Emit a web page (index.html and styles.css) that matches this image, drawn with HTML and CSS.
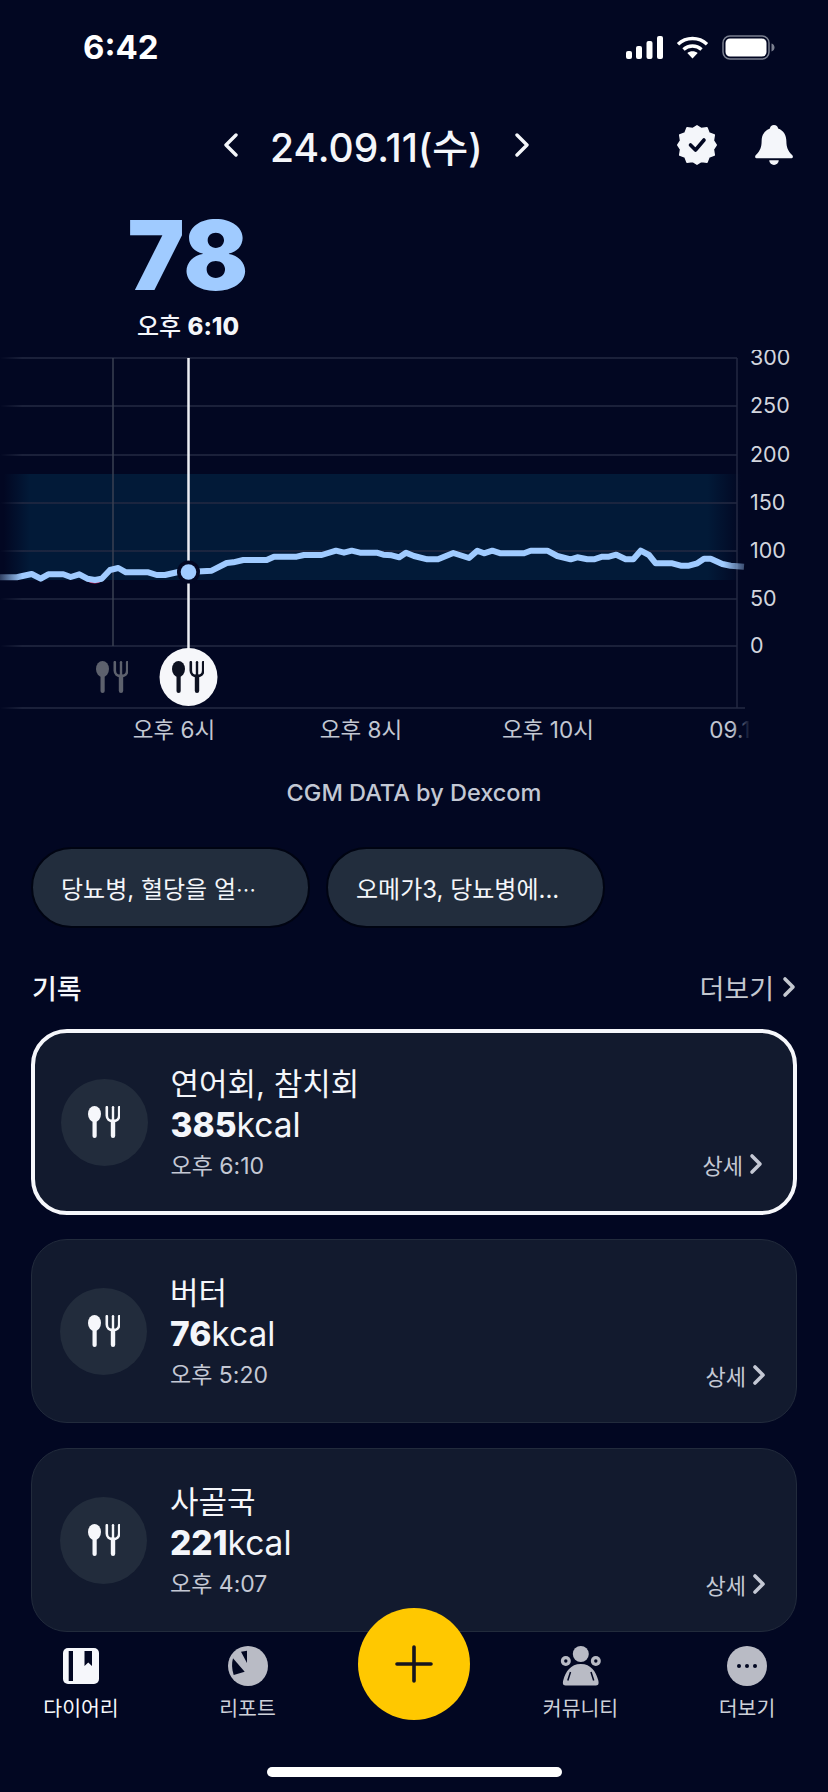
FILE: index.html

```html
<!DOCTYPE html>
<html lang="ko">
<head>
    <meta charset="UTF-8">
    <meta name="viewport" content="width=device-width, initial-scale=1.0">
    <title>다이어리</title>
    <link rel="stylesheet" href="styles.css">
</head>
<body>
    <svg class="defs" width="0" height="0">
        <symbol id="meal" viewBox="0 0 32 32">
            <ellipse cx="6.500" cy="8" rx="6.500" ry="8"/>
            <rect x="4.500" y="12" width="4.200" height="20" rx="2.100"/>
            <path d="M18.800 1.200v8.300c0 3.700 2.700 5.700 6.200 5.700s6.200-2 6.200-5.700V1.200" fill="none" stroke="currentColor" stroke-width="2.600" stroke-linecap="round"/>
            <path d="M25 1.200v12" fill="none" stroke="currentColor" stroke-width="2.400" stroke-linecap="round"/>
            <rect x="22.800" y="13" width="4.400" height="19" rx="2.200"/>
        </symbol>
        <symbol id="chevron" viewBox="0 0 14 22">
            <path d="M3 3l8 8-8 8" fill="none" stroke="currentColor" stroke-width="3.600" stroke-linecap="round" stroke-linejoin="round"/>
        </symbol>
    </svg>

    <div class="screen">
        <div class="status-bar">
            <span class="clock">6:42</span>
            <div class="status-icons">
                <svg width="37" height="23" viewBox="0 0 37 23" fill="#fff">
                    <rect x="0" y="15" width="6" height="8" rx="2"/>
                    <rect x="10" y="10" width="6" height="13" rx="2"/>
                    <rect x="20.500" y="5" width="6" height="18" rx="2"/>
                    <rect x="31" y="0" width="6" height="23" rx="2"/>
                </svg>
                <svg width="33" height="23" viewBox="0 0 33 23" fill="none" stroke="#fff" stroke-width="3.400">
                    <path d="M2 8.200C10 .6 23 .6 31 8.200"/>
                    <path d="M7.500 13.500c5-4.600 13-4.600 18 0"/>
                    <path d="M16.500 22.500l-5.200-5.400c2.900-2.400 7.500-2.400 10.400 0z" fill="#fff" stroke="none"/>
                </svg>
                <svg width="53" height="25" viewBox="0 0 53 25">
                    <rect x="1" y="1" width="46" height="23" rx="7" fill="none" stroke="#7b8090" stroke-width="1.500"/>
                    <rect x="3.500" y="3.500" width="41" height="18" rx="4.500" fill="#fff"/>
                    <path d="M49.500 8.500c2 .6 3 2.200 3 4s-1 3.400-3 4z" fill="#7b8090"/>
                </svg>
            </div>
        </div>

        <div class="top-bar">
            <svg class="nav-arrow" width="16" height="24" viewBox="0 0 16 24"><path d="M13 2L3 12l10 10"/></svg>
            <span class="date">24.09.11(수)</span>
            <svg class="nav-arrow" width="16" height="24" viewBox="0 0 16 24"><path d="M3 2l10 10L3 22"/></svg>
            <div class="top-actions">
                <svg width="40" height="40" viewBox="0 0 40 40">
                    <path fill="#f4f6fa" stroke="#f4f6fa" stroke-width="1.500" stroke-linejoin="round" d="M20 .8L24.400 3.600 30 2.700 32 8 37.300 10 36.400 15.600 39.200 20 36.400 24.400 37.300 30 32 32 30 37.300 24.400 36.400 20 39.200 15.600 36.400 10 37.300 8 32 2.700 30 3.600 24.400.8 20 3.600 15.600 2.700 10 8 8 10 2.700 15.600 3.600z"/>
                    <path d="M13.500 20l5 5 8.500-10" fill="none" stroke="#020722" stroke-width="3.600" stroke-linecap="round" stroke-linejoin="round"/>
                </svg>
                <svg width="42" height="40" viewBox="0 0 42 42" fill="#f4f6fa">
                    <path d="M21 0c2.500 0 4 1.600 4.300 3.600C31 5.500 34 10.500 34 17c0 6 1.500 10 6 14.500 1.600 1.600.8 3.500-1.500 3.500h-35C1.200 35 .4 33.100 2 31.500 6.500 27 8 23 8 17c0-6.500 3-11.500 8.700-13.400C17 1.600 18.500 0 21 0z"/>
                    <path d="M16 37h10a5 5 0 0 1-10 0z"/>
                </svg>
            </div>
        </div>

        <div class="reading">
            <div class="reading-value">78</div>
            <div class="reading-time">오후 <b>6:10</b></div>
        </div>

        <svg class="chart" width="828" height="400" viewBox="0 350 828 400">
            <defs>
                <linearGradient id="bandFade" gradientUnits="userSpaceOnUse" x1="0" y1="0" x2="745" y2="0">
                    <stop offset="0.005" stop-color="#021a38" stop-opacity="0"/>
                    <stop offset="0.04" stop-color="#021a38"/>
                    <stop offset="0.95" stop-color="#021a38"/>
                    <stop offset="0.995" stop-color="#021a38" stop-opacity="0"/>
                </linearGradient>
                <linearGradient id="lineFade" gradientUnits="userSpaceOnUse" x1="0" y1="0" x2="746" y2="0">
                    <stop offset="0" stop-color="#a0cbff" stop-opacity="0.3"/>
                    <stop offset="0.03" stop-color="#a0cbff"/>
                    <stop offset="0.97" stop-color="#a0cbff"/>
                    <stop offset="1" stop-color="#a0cbff" stop-opacity="0.3"/>
                </linearGradient>
                <linearGradient id="gridFade" gradientUnits="userSpaceOnUse" x1="0" y1="0" x2="745" y2="0">
                    <stop offset="0" stop-color="#232942" stop-opacity="0"/>
                    <stop offset="0.03" stop-color="#232942"/>
                </linearGradient>
                <linearGradient id="cutFade" gradientUnits="userSpaceOnUse" x1="706" y1="0" x2="750" y2="0">
                    <stop offset="0.6" stop-color="#c3c7d2"/>
                    <stop offset="1" stop-color="#c3c7d2" stop-opacity="0"/>
                </linearGradient>
            </defs>

            <rect x="0" y="474" width="745" height="106" fill="url(#bandFade)"/>

            <g class="grid">
                <path d="M0 358H737"/>
                <path d="M0 406H737"/>
                <path d="M0 455H737"/>
                <path d="M0 503H737"/>
                <path d="M0 551H737"/>
                <path d="M0 599H737"/>
                <path d="M0 646H737"/>
                <path class="axis-y" d="M737 358V708"/>
                <path d="M0 708H745"/>
            </g>
            <path d="M113 358V646" stroke="#3a4052" stroke-width="1.500"/>
            <path d="M188.500 358V650" stroke="#eceef3" stroke-width="2.500"/>

            <path d="M87.300 579Q95 584 101.700 579" fill="none" stroke="#e0245e" stroke-width="4"/>
            <path class="glucose" d="M0 577.300L16.700 577.300 31.700 574 40.700 578.700 48.300 574.300 63.300 574.300 70.700 577 79.300 574.300 87.300 578.700 95 580 101.700 578.700 110 570 118.300 568 126 572.300 148.300 572.300 156.700 575 165 575 178.300 572 188.300 572 211.700 570.700 226.700 563 233.300 562.300 243.300 560 266.700 560 274 556.700 296.700 556.700 304 555 321.700 555 336 550.700 344 552.700 351.700 550.700 360 552.700 376.700 552.700 383.300 554.700 391.700 555.300 399.300 557.300 406 552.700 414 556 427.300 559.300 438 559.300 453.300 553 469 558 477.300 550.700 484 553.300 492.300 550.700 500.700 553.300 524 553.300 530.700 550.700 547.300 550.700 557.300 556 570.700 559.300 577.300 557.300 587.300 559.300 594 559.300 602.300 556.700 609 556.700 616.300 554.700 625.700 559.300 633.300 559.300 640.700 550.700 649 555 655.700 563.300 672.300 563.300 680.700 565.700 689 565.700 697.300 563.300 704 558.700 710.700 558.700 722.300 564 730.700 565.700 744 566.700"/>

            <circle cx="188.500" cy="572" r="11.500" fill="#020722"/>
            <circle cx="188.500" cy="572" r="7.800" fill="#a0cbff"/>

            <use href="#meal" class="meal-past" x="96" y="661" width="32" height="32"/>
            <circle cx="188.500" cy="677" r="29" fill="#f6f7fa"/>
            <use href="#meal" class="meal-active" x="172" y="661" width="32" height="32"/>

            <g class="y-labels">
                <text x="750" y="365">300</text>
                <text x="750" y="413">250</text>
                <text x="750" y="462">200</text>
                <text x="750" y="510">150</text>
                <text x="750" y="558">100</text>
                <text x="750" y="606">50</text>
                <text x="750" y="653">0</text>
            </g>
            <g class="x-labels">
                <text x="174" y="738">오후 6시</text>
                <text x="361" y="738">오후 8시</text>
                <text x="548" y="738">오후 10시</text>
                <text x="730" y="738" class="x-cut">09.1</text>
            </g>
        </svg>

        <div class="credit">CGM DATA by Dexcom</div>

        <div class="chips">
            <div class="chip"><span>당뇨병, 혈당을 얼<span class="ellipsis">…</span></span></div>
            <div class="chip">오메가3, 당뇨병에...</div>
        </div>

        <div class="section-head">
            <span class="section-title">기록</span>
            <span class="section-more">더보기 <svg width="14" height="22"><use href="#chevron"/></svg></span>
        </div>

        <div class="records">
            <div class="record selected">
                <div class="record-icon"><svg width="32" height="32"><use href="#meal"/></svg></div>
                <div class="record-body">
                    <div class="record-name">연어회, 참치회</div>
                    <div class="record-kcal"><b>385</b>kcal</div>
                    <div class="record-time">오후 6:10</div>
                </div>
                <span class="record-link">상세 <svg width="14" height="22"><use href="#chevron"/></svg></span>
            </div>
            <div class="record">
                <div class="record-icon"><svg width="32" height="32"><use href="#meal"/></svg></div>
                <div class="record-body">
                    <div class="record-name">버터</div>
                    <div class="record-kcal"><b>76</b>kcal</div>
                    <div class="record-time">오후 5:20</div>
                </div>
                <span class="record-link">상세 <svg width="14" height="22"><use href="#chevron"/></svg></span>
            </div>
            <div class="record">
                <div class="record-icon"><svg width="32" height="32"><use href="#meal"/></svg></div>
                <div class="record-body">
                    <div class="record-name">사골국</div>
                    <div class="record-kcal"><b>221</b>kcal</div>
                    <div class="record-time">오후 4:07</div>
                </div>
                <span class="record-link">상세 <svg width="14" height="22"><use href="#chevron"/></svg></span>
            </div>
        </div>

        <nav class="tab-bar">
            <div class="tab active">
                <svg width="36" height="40" viewBox="0 0 36 40">
                    <rect x="0" y="2" width="36" height="36" rx="5" fill="#f6f7fb"/>
                    <rect x="5.700" y="5" width="4.300" height="30" fill="#020722"/>
                    <path d="M21.500 5h7.500v15l-3.750-3.500L21.500 20z" fill="#020722"/>
                </svg>
                <span>다이어리</span>
            </div>
            <div class="tab">
                <svg width="40" height="40" viewBox="0 0 40 40">
                    <circle cx="20" cy="20" r="20" fill="#b9bbc5"/>
                    <path d="M13 5.700L19 4.700V17z" fill="#020722"/>
                    <path d="M5 12.300L16.700 25.700 5.700 29C3.800 23 3.500 17.500 5 12.300z" fill="#020722"/>
                </svg>
                <span>리포트</span>
            </div>
            <div class="tab-spacer"></div>
            <div class="tab">
                <svg width="42" height="40" viewBox="0 0 41 40" fill="#b9bbc5">
                    <circle cx="20.300" cy="8" r="8"/>
                    <circle cx="5.300" cy="15" r="5"/>
                    <circle cx="35.300" cy="15" r="5"/>
                    <circle cx="5.300" cy="15" r="1.700" fill="#020722"/>
                    <circle cx="35.300" cy="15" r="1.700" fill="#020722"/>
                    <path d="M5 39.500C2 39.500 2 36.500 3 33.500 5 26 10 18 20.300 18S35.500 26 37.500 33.500C38.500 36.500 38.500 39.500 35.500 39.500z"/>
                    <path d="M10 26l-2.700 8.500M30.500 26l2.700 8.500" stroke="#020722" stroke-width="1.500" fill="none"/>
                </svg>
                <span>커뮤니티</span>
            </div>
            <div class="tab">
                <svg width="40" height="40" viewBox="0 0 40 40">
                    <circle cx="20" cy="20" r="20" fill="#b9bbc5"/>
                    <circle cx="12" cy="20" r="2" fill="#020722"/>
                    <circle cx="20" cy="20" r="2" fill="#020722"/>
                    <circle cx="28" cy="20" r="2" fill="#020722"/>
                </svg>
                <span>더보기</span>
            </div>
            <button class="fab">
                <svg width="38" height="38" viewBox="0 0 38 38"><path d="M19 2V36M2 19H36" stroke="#15151f" stroke-width="3.600" stroke-linecap="round"/></svg>
            </button>
            <div class="home-indicator"></div>
        </nav>
    </div>
</body>
</html>
```

FILE: styles.css

```css
* {
  box-sizing: border-box;
}

body {
  margin: 0;
  background-color: #020722;
  font-family: Inter, "Noto Sans CJK KR", sans-serif;
  color: #f4f6fa;
}

.defs {
  position: absolute;
}

.screen {
  position: relative;
  width: 828px;
  height: 1792px;
  overflow: hidden;
  display: flex;
  flex-direction: column;
  background-color: #020722;
}

/* status bar */
.status-bar {
  height: 94px;
  display: flex;
  align-items: center;
  justify-content: space-between;
  padding: 0 53px 0 83px;
}

.clock {
  font-size: 33px;
  font-weight: 700;
  color: #fff;
}

.status-icons {
  display: flex;
  align-items: center;
  gap: 13px;
}

/* date header */
.top-bar {
  height: 102px;
  display: flex;
  align-items: center;
  padding: 0 33px 0 223px;
}

.nav-arrow {
  flex: none;
  fill: none;
  stroke: #f4f6fa;
  stroke-width: 3.4;
  stroke-linecap: round;
  stroke-linejoin: round;
}

.date {
  margin: 0 31px;
  font-size: 39px;
  font-weight: 500;
  white-space: nowrap;
}

.top-actions {
  margin-left: auto;
  display: flex;
  align-items: center;
  gap: 36px;
}

/* current reading */
.reading {
  width: 376px;
  height: 154px;
  padding-top: 9px;
  text-align: center;
}

.reading-value {
  height: 100px;
  line-height: 100px;
  font-size: 96px;
  font-weight: 900;
  color: #a0cbff;
}

.reading-time {
  margin-top: 9px;
  line-height: 26px;
  font-size: 24px;
  font-weight: 500;
}

.reading-time b {
  font-weight: 800;
}

/* chart */
.chart {
  flex: none;
  display: block;
}

.grid path {
  stroke: url(#gridFade);
  stroke-width: 1.5;
}

.grid .axis-y {
  stroke: #232942;
}

.glucose {
  fill: none;
  stroke: url(#lineFade);
  stroke-width: 6;
  stroke-linejoin: round;
}

.meal-past {
  fill: #5d616d;
  color: #5d616d;
}

.meal-active {
  fill: #0d1120;
  color: #0d1120;
}

.y-labels text {
  font-size: 21.5px;
  fill: #d2d5de;
}

.x-labels text {
  font-size: 22.500px;
  fill: #c3c7d2;
  text-anchor: middle;
}

.x-labels .x-cut {
  fill: url(#cutFade);
}

.credit {
  margin-top: 29px;
  line-height: 28px;
  text-align: center;
  font-size: 23.500px;
  font-weight: 500;
  color: #c3c8d4;
}

/* suggestion chips */
.chips {
  display: flex;
  gap: 16px;
  margin-top: 40px;
  padding-left: 31px;
}

.chip {
  width: 279px;
  height: 81px;
  padding-left: 28px;
  display: flex;
  align-items: center;
  border: 2px solid #000412;
  border-radius: 41px;
  background-color: #222d3d;
  font-size: 24px;
}

.ellipsis {
  font-family: "Noto Sans CJK SC", sans-serif;
  font-size: 20px;
}

/* records */
.section-head {
  display: flex;
  align-items: center;
  justify-content: space-between;
  height: 34px;
  margin-top: 42px;
  padding: 0 32px;
}

.section-title {
  font-size: 27px;
  font-weight: 500;
}

.section-more {
  display: flex;
  align-items: center;
  gap: 8px;
  font-size: 27px;
  color: #c4c8d0;
}

.records {
  display: flex;
  flex-direction: column;
  gap: 25px;
  margin-top: 26px;
  padding: 0 31px;
}

.record {
  flex: none;
  height: 184px;
  display: flex;
  align-items: center;
  gap: 23px;
  padding: 0 28px;
  border: 1.5px solid #222b3c;
  border-radius: 36px;
  background-color: #121a2e;
  position: relative;
}

.record.selected {
  height: 186px;
  margin: -1px 0;
  padding: 0 25.500px;
  border: 4px solid #f6f7fb;
}

.record-icon {
  flex: none;
  width: 87px;
  height: 87px;
  display: flex;
  align-items: center;
  justify-content: center;
  border-radius: 50%;
  background-color: #222c3c;
  fill: #f6f7fb;
  color: #f6f7fb;
}

.record-name {
  line-height: 40px;
  font-size: 31px;
}

.record-kcal {
  margin-top: 1px;
  line-height: 40px;
  font-size: 33.500px;
}

.record-kcal b {
  font-weight: 800;
}

.record-time {
  margin-top: 7px;
  line-height: 28px;
  font-size: 23px;
  color: #c4c8d4;
}

.record-link {
  position: absolute;
  right: 30px;
  bottom: 31px;
  display: flex;
  align-items: center;
  gap: 6px;
  font-size: 22px;
  color: #c4c8d4;
}

/* bottom tabs */
.tab-bar {
  position: absolute;
  left: 0;
  right: 0;
  bottom: 0;
  height: 160px;
  display: grid;
  grid-template-columns: repeat(5, 120px);
  justify-content: space-between;
  align-items: start;
  padding: 14px 21px 0;
  background-color: #020722;
}

.tab {
  display: flex;
  flex-direction: column;
  align-items: center;
  gap: 6px;
  font-size: 20.500px;
  color: #cdd0d9;
}

.tab.active {
  color: #f6f7fb;
}

.fab {
  position: absolute;
  left: 358px;
  top: -24px;
  width: 112px;
  height: 112px;
  display: flex;
  align-items: center;
  justify-content: center;
  padding: 0;
  border: none;
  border-radius: 50%;
  background-color: #ffc800;
}

.home-indicator {
  position: absolute;
  left: 267px;
  bottom: 15px;
  width: 295px;
  height: 10px;
  border-radius: 5px;
  background-color: #fff;
}
```
